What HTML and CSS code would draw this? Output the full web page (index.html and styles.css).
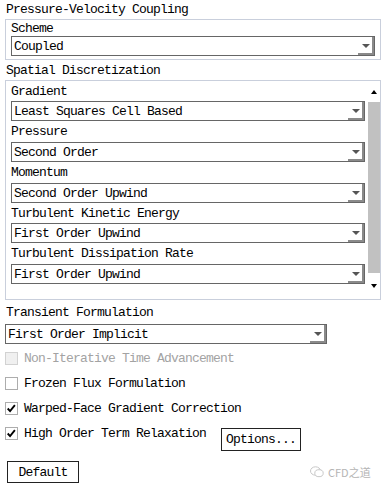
FILE: index.html
```html
<!DOCTYPE html>
<html lang="en">
<head>
    <meta charset="UTF-8">
    <meta name="viewport" content="width=device-width, initial-scale=1.0">
    <title>Solution Methods</title>
    <link rel="stylesheet" href="styles.css">
</head>
<body>
    <div class="panel">
        <div class="heading">Pressure-Velocity Coupling</div>
        <div class="group">
            <div class="field-label">Scheme</div>
            <div class="select"><span class="value">Coupled</span><span class="arrow"></span></div>
        </div>

        <div class="heading spaced">Spatial Discretization</div>
        <div class="group scroll-group">
            <div class="fields">
                <div class="field-label">Gradient</div>
                <div class="select"><span class="value">Least Squares Cell Based</span><span class="arrow"></span></div>
                <div class="field-label">Pressure</div>
                <div class="select"><span class="value">Second Order</span><span class="arrow"></span></div>
                <div class="field-label">Momentum</div>
                <div class="select"><span class="value">Second Order Upwind</span><span class="arrow"></span></div>
                <div class="field-label">Turbulent Kinetic Energy</div>
                <div class="select"><span class="value">First Order Upwind</span><span class="arrow"></span></div>
                <div class="field-label">Turbulent Dissipation Rate</div>
                <div class="select"><span class="value">First Order Upwind</span><span class="arrow"></span></div>
            </div>
            <div class="scrollbar">
                <span class="scroll-btn"><span class="tri-up"></span></span>
                <span class="thumb"></span>
                <span class="scroll-btn bottom"><span class="tri-down"></span></span>
            </div>
        </div>

        <div class="heading transient">Transient Formulation</div>
        <div class="select wide"><span class="value">First Order Implicit</span><span class="arrow"></span></div>

        <div class="checks">
            <div class="check-row disabled"><span class="box"></span>Non-Iterative Time Advancement</div>
            <div class="check-row"><span class="box"></span>Frozen Flux Formulation</div>
            <div class="check-row"><span class="box checked"><svg viewBox="0 0 13 13" width="11" height="11"><path d="M2 6.5 L4.8 9.5 L10.5 2.5" fill="none" stroke="#000" stroke-width="2.2"/></svg></span>Warped-Face Gradient Correction</div>
            <div class="check-row last"><span class="box checked"><svg viewBox="0 0 13 13" width="11" height="11"><path d="M2 6.5 L4.8 9.5 L10.5 2.5" fill="none" stroke="#000" stroke-width="2.2"/></svg></span>High Order Term Relaxation<button class="btn options">Options...</button></div>
        </div>

        <button class="btn default">Default</button>
    </div>

    <div class="watermark">
        <svg viewBox="0 0 14 12" width="14" height="12"><ellipse cx="5.5" cy="5" rx="5" ry="4.2" fill="none" stroke="#c8c8c8" stroke-width="1"/><ellipse cx="9" cy="7.2" rx="4.2" ry="3.5" fill="#fff" stroke="#c8c8c8" stroke-width="1"/></svg>
        <span>CFD之道</span>
    </div>
</body>
</html>
```

FILE: styles.css
```css
body { margin: 0; background: #fff; font-family: "Liberation Mono", "DejaVu Sans Mono", monospace; font-size: 13px; letter-spacing: -0.8px; color: #000; }
.panel { display: flex; flex-direction: column; align-items: flex-start; padding: 0 5px; width: 375px; }
.heading { flex: none; height: 19px; line-height: 20px; padding-left: 1px; }
.heading.spaced { height: 20px; line-height: 22px; }
.heading.transient { height: 24px; line-height: 26px; }
.group { flex: none; box-sizing: border-box; width: 376px; border: 1px solid #c9cfdc; padding: 0 5px 3px 5px; }
.field-label { height: 16px; line-height: 18px; }
.select { flex: none; box-sizing: border-box; display: flex; height: 20px; border: 1px solid #666; background: #fff; width: 100%; }
.select .value { flex: 1; line-height: 19px; padding-left: 2px; white-space: nowrap; }
.select .arrow { width: 16px; position: relative; box-shadow: inset -2px -2px 0 #8a8a8a; }
.select .arrow::after { content: ""; position: absolute; left: 4px; top: 7px; border-left: 4px solid transparent; border-right: 4px solid transparent; border-top: 4px solid #555; }
.select.wide { width: 322px; }

.scroll-group { display: flex; height: 220px; padding: 0; }
.fields { flex: 1; padding: 0 3px 0 5px; overflow: hidden; }
.fields .field-label { height: 20.75px; line-height: 21px; }
.fields .field-label:first-child { height: 20px; }
.scrollbar { width: 12px; display: flex; flex-direction: column; }
.scroll-btn { height: 21px; display: flex; align-items: center; justify-content: center; }
.scroll-btn.bottom { height: 26px; }
.tri-up { border-left: 3px solid transparent; border-right: 3px solid transparent; border-bottom: 4px solid #000; }
.tri-down { border-left: 3px solid transparent; border-right: 3px solid transparent; border-top: 4px solid #000; }
.thumb { flex: 1; background: #c1c1c1; }

.checks { flex: none; display: flex; flex-direction: column; margin-top: 2px; }
.check-row { display: flex; align-items: center; height: 25px; gap: 6px; }
.check-row.disabled { color: #a3a3a3; }
.check-row.last { align-items: flex-start; height: 30px; padding-top: 6px; box-sizing: border-box; line-height: 14px; }
.box { box-sizing: border-box; width: 13px; height: 13px; border: 1px solid #adadad; background: #fff; display: flex; align-items: center; justify-content: center; }
.check-row.disabled .box { background: #f0f0f0; border-color: #d2d2d2; }
.btn { font: inherit; letter-spacing: inherit; color: #000; background: #fff; border: 1px solid #222; padding: 0; height: 23px; }
.options { width: 80px; margin-left: 9px; margin-top: 1px; }
.default { flex: none; width: 72px; height: 22px; margin-left: 2px; margin-top: 10px; }

.watermark { position: absolute; left: 310px; top: 464px; display: flex; align-items: center; gap: 4px; color: #b4b4b4; font-family: "Noto Sans CJK SC", sans-serif; font-size: 11px; letter-spacing: 0; }
```
